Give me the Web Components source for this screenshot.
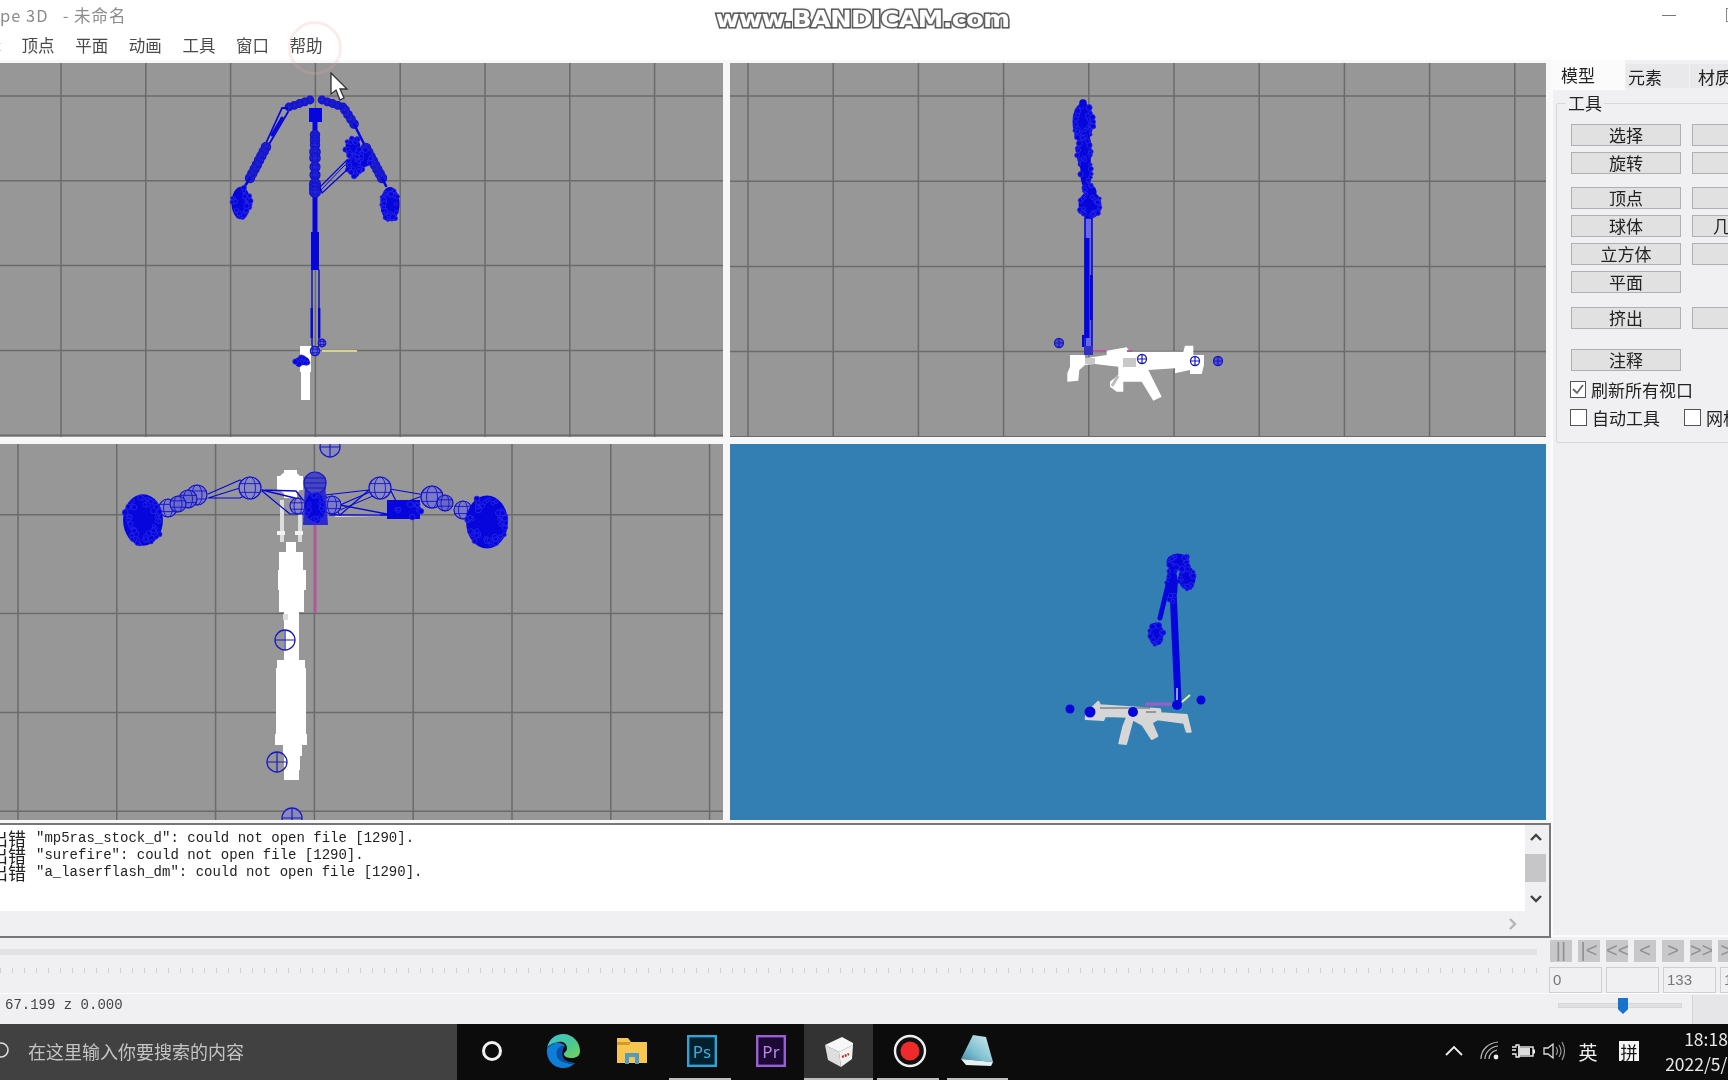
<!DOCTYPE html>
<html>
<head>
<meta charset="utf-8">
<title>MilkShape 3D</title>
<style>
   html, body { margin: 0; height: 1080px; overflow: hidden; background: #f0f0f2; }
   /* the reference is a video frame, everything in it is a little soft */
   body { position: relative; font-family: "Noto Sans CJK SC", "Noto Sans", sans-serif; filter: blur(.45px); }
</style>
</head>
<body>
<app-titlebar>pe 3D&nbsp;&nbsp;&nbsp;- 未命名</app-titlebar>
<app-menubar></app-menubar>
<app-main>
   <model-viewport slot="views" scene="front" view="0 63 723 374" gx="61" gy="96" step="84.8"></model-viewport>
   <model-viewport slot="views" scene="side" view="730 63 816 374" gx="748" gy="96" step="85.2"></model-viewport>
   <model-viewport slot="views" scene="top" view="0 444 723 376" gx="18" gy="416" step="98.8"></model-viewport>
   <model-viewport slot="views" scene="persp" view="730 444 816 376" blue></model-viewport>
   <log-panel slot="log"></log-panel>
   <tool-panel slot="tools"></tool-panel>
</app-main>
<time-bar></time-bar>
<status-bar>67.199 z 0.000</status-bar>
<win-taskbar></win-taskbar>
<screen-overlay></screen-overlay>

<script>
const BLUE = '#0606dc';

// small seeded random so the wire blobs stay the same on every load
function makeRandom(seed) {
   let s = seed;
   return () => {
      s = (s * 16807) % 2147483647;
      return s / 2147483647;
   };
}

function poly(points, width, color) {
   return `<polyline points="${points}" fill="none" stroke="${color || BLUE}" stroke-width="${width}" stroke-linejoin="round" stroke-linecap="round"/>`;
}

function shape(points, color, grow) {
   const c = color || '#fff';
   return `<polygon points="${points}" fill="${c}" stroke="${c}" stroke-width="${grow || 0}" stroke-linejoin="round"/>`;
}

function rects(list, color) {
   return list.map(([x1, x2, y1, y2]) => `<rect x="${x1}" y="${y1}" width="${x2 - x1}" height="${y2 - y1}" fill="${color || '#fff'}"/>`).join('');
}

function blob(rnd, cx, cy, rx, ry, count) {
   let out = `<ellipse cx="${cx}" cy="${cy}" rx="${rx * 0.95}" ry="${ry * 0.95}" fill="${BLUE}"/>`;
   for (let i = 0; i < count; i++) {
      const a = rnd() * Math.PI * 2;
      const d = 0.55 + rnd() * 0.4;
      const x = cx + Math.cos(a) * rx * d;
      const y = cy + Math.sin(a) * ry * d;
      const r = 1.4 + rnd() * 1.6;
      out += `<circle cx="${x.toFixed(1)}" cy="${y.toFixed(1)}" r="${r.toFixed(1)}" fill="${BLUE}" stroke="#2a2ae8" stroke-width=".8"/>`;
   }
   return out;
}

function bead(cx, cy, r, fill) {
   return `<circle cx="${cx}" cy="${cy}" r="${r}" fill="${fill || '#4a4ad0'}" stroke="#1414c8" stroke-width="1.2"/>` +
      `<ellipse cx="${cx}" cy="${cy}" rx="${r * 0.5}" ry="${r}" fill="none" stroke="#1414c8" stroke-width=".9"/>` +
      `<path d="M${cx - r} ${cy - r * 0.4}H${cx + r}M${cx - r} ${cy + r * 0.4}H${cx + r}" stroke="#1414c8" stroke-width=".9"/>`;
}

function beads(x1, y1, x2, y2, count, r) {
   let out = '';
   for (let i = 0; i < count; i++) {
      const t = count > 1 ? i / (count - 1) : 0;
      out += bead(+(x1 + (x2 - x1) * t).toFixed(1), +(y1 + (y2 - y1) * t).toFixed(1), r, '#2222d8');
   }
   return out;
}

function sphere(cx, cy, r, fill) {
   return `<circle cx="${cx}" cy="${cy}" r="${r}" fill="${fill || 'none'}" stroke="#1a1ac0" stroke-width="1.3"/>` +
      `<path d="M${cx - r} ${cy}H${cx + r}M${cx} ${cy - r}V${cy + r}" stroke="#1a1ac0" stroke-width="1.2"/>`;
}

const SCENES = {
   front() {
      const rnd = makeRandom(11);
      let s = '';
      s += rects([[300, 311, 346, 372], [301, 310, 372, 400]]);
      s += poly('315,118 315,232', 5);
      s += `<rect x="311" y="232" width="8" height="38" fill="${BLUE}"/>`;
      s += poly('312,270 312,345 316,352 319,345 319,270', 1.4);
      s += `<rect x="310.5" y="308" width="2.4" height="30" fill="${BLUE}"/><rect x="318" y="308" width="2.4" height="30" fill="${BLUE}"/>`;
      s += beads(315, 135, 315, 145, 3, 4.6);
      s += beads(315, 152, 315, 158, 2, 5.2);
      s += beads(315, 167, 315, 175, 2, 5);
      s += beads(315, 184, 315, 192, 3, 5.4);
      s += `<rect x="309" y="108" width="13" height="14" fill="${BLUE}"/>`;
      // left arm
      s += beads(310, 100, 289, 107, 5, 3.8);
      s += poly('287,108 282,108 266,143 268,146 288,112', 1.8);
      s += poly('282,118 272,135', 3);
      s += beads(266, 147, 250, 178, 8, 4.6);
      s += poly('250,178 245,186', 2.5);
      // right arm
      s += beads(322, 100, 343, 107, 5, 3.8);
      s += beads(345, 110, 354, 124, 4, 4.2);
      s += poly('354,124 366,148', 2.5);
      s += beads(366, 148, 382, 178, 8, 4.6);
      s += poly('382,178 386,186', 2.5);
      s += blob(rnd, 241, 203, 10, 17, 30);
      s += blob(rnd, 390, 204, 10, 18, 30);
      s += blob(rnd, 353, 148, 8, 11, 14);
      s += blob(rnd, 355, 165, 10, 9, 16);
      s += blob(rnd, 366, 158, 6, 9, 8);
      s += blob(rnd, 355, 172, 5, 6, 6);
      s += poly('347,160 320,187 322,193 350,167', 1.3);
      s += poly('345,165 321,190', 1);
      s += blob(rnd, 302, 361, 8, 4.5, 10);
      s += `<path d="M322 351H357" stroke="#d8d488" stroke-width="2"/>`;
      s += bead(315, 351, 4.6, '#6060c8');
      s += bead(322, 343, 3.8, '#6060c8');
      return s;
   },
   side() {
      const rnd = makeRandom(29);
      const X = x => 1030 + x / 3;
      const Y = y => 80 + y / 3;
      const gun = [[120, 825], [165, 825], [165, 835], [230, 825], [230, 812], [290, 802], [300, 815], [460, 815], [465, 797], [490, 797], [490, 825], [522, 825], [522, 855], [515, 882], [480, 882], [480, 870], [435, 880], [435, 865], [355, 870], [395, 950], [370, 962], [335, 905], [280, 905], [280, 935], [260, 935], [240, 920], [240, 905], [265, 885], [265, 860], [195, 852], [165, 855], [148, 870], [145, 902], [112, 905], [112, 880], [120, 860]];
      let s = '';
      s += shape(gun.map(p => `${X(p[0]).toFixed(1)},${Y(p[1]).toFixed(1)}`).join(' '));
      s += `<rect x="1085" y="358" width="10" height="6" fill="#c8c8c8"/><rect x="1123" y="358" width="13" height="9" fill="#c8c8c8"/>`;
      s += `<path d="M1118 376L1112 386" stroke="#bbb" stroke-width="3"/>`;
      s += `<path d="M1092 351H1106M1127 351H1132" stroke="#c0559a" stroke-width="2"/>`;
      s += `<rect x="1085" y="218" width="7" height="130" fill="#6a6ae0" stroke="${BLUE}" stroke-width="1.6"/>`;
      s += `<rect x="1084.5" y="238" width="5" height="100" fill="${BLUE}"/><rect x="1090" y="275" width="2.8" height="45" fill="${BLUE}"/>`;
      s += `<rect x="1084" y="346" width="9" height="9" fill="#3030c8"/>`;
      s += `<rect x="1082" y="335" width="2" height="12" fill="${BLUE}"/>`;
      s += blob(rnd, 1083, 122, 11, 20, 30);
      s += blob(rnd, 1084, 150, 8, 22, 24);
      s += blob(rnd, 1086, 172, 6, 18, 10);
      s += `<circle cx="1083" cy="103" r="3.8" fill="${BLUE}"/>`;
      s += blob(rnd, 1090, 205, 12, 14, 28);
      s += blob(rnd, 1090, 192, 7, 7, 8);
      s += sphere(1059, 343, 4.5, '#4a4acc');
      s += sphere(1142, 359, 4.5, '#fff');
      s += sphere(1195, 361, 4.5, '#fff');
      s += sphere(1218, 361, 4.5, '#5050cc');
      return s;
   },
   top() {
      const rnd = makeRandom(47);
      let s = '';
      s += rects([[280, 284, 500, 542], [298, 302, 500, 542]], '#ddd');
      s += rects([[277, 285, 531, 535], [295, 303, 531, 535]], '#f2f2f2');
      s += `<circle cx="290" cy="483" r="12" fill="#fff"/>`;
      s += rects([[277, 303, 476, 490], [284, 297, 470, 498]]);
      s += rects([[286, 296, 542, 552], [279, 303, 552, 570], [278, 306, 570, 590], [279, 304, 590, 612], [284, 299, 612, 660], [277, 305, 660, 668], [276, 306, 668, 724], [276, 306, 724, 734], [275, 307, 734, 745], [283, 302, 745, 756], [284, 300, 756, 770], [284, 299, 770, 780]]);
      s += rects([[283, 288, 614, 620]], '#ddd');
      s += `<rect x="314" y="525" width="2.5" height="88" fill="#c050a0"/>`;
      s += `<path d="M335 516L380 515" stroke="#e8e4a0" stroke-width="2"/>`;
      s += poly('262,490 296,491 303,500 262,490', 1.3);
      s += poly('208,494 240,480 261,487 240,498 208,498 240,488', 1.2);
      s += poly('262,491 290,514 305,514', 1.2);
      s += poly('325,495 369,490 340,515 325,495', 1.2);
      s += poly('330,515 372,515 392,515 340,505 370,492', 1.3);
      s += poly('390,489 425,495 398,505 390,489', 1.2);
      s += poly('340,510 380,493', 1);
      s += bead(197, 495, 10, '#7a7ac8');
      s += bead(188, 499, 9, '#6a6ac8');
      s += bead(168, 508, 9, '#7a7ac8');
      s += bead(178, 504, 8, '#6a6ac8');
      s += bead(250, 488, 11, '#8a8ac0');
      s += bead(380, 488, 11, '#8a8ac0');
      s += bead(432, 497, 11, '#7a7ac8');
      s += bead(445, 503, 8, '#6a6ac8');
      s += bead(463, 510, 9, '#7a7ac8');
      s += bead(332, 505, 9, '#7a7ac8');
      s += bead(298, 506, 8, '#8a8ac0');
      s += shape('305,482 315,472 325,482 328,525 303,525', '#2a2ad0');
      s += `<circle cx="315" cy="483" r="11" fill="#4646c0" stroke="#1a1ac0" stroke-width="1.2"/>`;
      s += `<path d="M304 483H326M304 478H326M304 488H326" stroke="#1a1ac0" stroke-width="1"/>`;
      s += blob(rnd, 315, 507, 11, 15, 18);
      s += `<rect x="387" y="500" width="33" height="19" fill="${BLUE}"/>`;
      s += blob(rnd, 408, 510, 14, 9, 10);
      s += blob(rnd, 143, 520, 21, 27, 50);
      s += blob(rnd, 487, 522, 22, 28, 50);
      s += sphere(285, 640, 10);
      s += sphere(277, 762, 10);
      s += sphere(292, 818, 10, '#8a8ab8');
      s += sphere(330, 447, 10, '#8a8ab8');
      return s;
   },
   persp() {
      const rnd = makeRandom(61);
      const X = x => 1040 + x / 3;
      const Y = y => 530 + y / 3;
      const gun = [[140, 545], [160, 530], [175, 515], [180, 526], [360, 538], [362, 550], [440, 555], [452, 605], [440, 605], [432, 578], [352, 568], [335, 578], [352, 618], [335, 627], [308, 585], [278, 568], [258, 642], [238, 640], [250, 590], [262, 560], [195, 558], [190, 570], [137, 567]];
      let s = '';
      s += shape(gun.map(p => `${X(p[0]).toFixed(1)},${Y(p[1]).toFixed(1)}`).join(' '), '#d6d6d6', 2);
      s += `<path d="M1100 708H1150M1146 712H1156" stroke="#5a5a5a" stroke-width="1"/>`;
      s += `<path d="M1145 704H1173" stroke="#9a60c8" stroke-width="3"/>`;
      s += `<path d="M1182 702L1190 695" stroke="#e0f0a0" stroke-width="2"/>`;
      s += poly('1172,568 1178,700', 7);
      s += `<path d="M1177 688V702" stroke="#cfd8f8" stroke-width="1.4"/>`;
      s += blob(rnd, 1178, 562, 12, 9, 16);
      s += blob(rnd, 1187, 578, 9, 12, 14);
      s += blob(rnd, 1172, 585, 6, 20, 8);
      s += poly('1168,585 1160,618', 5);
      s += blob(rnd, 1156, 634, 8, 12, 12);
      for (const [x, y, r] of [[1070, 709, 4.5], [1090, 712, 5.5], [1133, 712, 5], [1201, 700, 4.5], [1177, 705, 5]]) {
         s += `<circle cx="${x}" cy="${y}" r="${r}" fill="${BLUE}"/>`;
      }
      return s;
   }
};

class AppTitlebar extends HTMLElement {
   constructor() {
      super();
      this.attachShadow({mode: 'open'}).innerHTML = `
         <style>
            :host { display: flex; align-items: center; height: 30px; background: #fff; color: #8c8c8c; font-size: 16.5px; letter-spacing: 1px; white-space: nowrap; }
            .grow { flex: 1; }
            .min { width: 14px; height: 1px; background: #777; margin-right: 50px; }
            .max { width: 12px; height: 12px; border: 1px solid #888; margin-right: -12px; }
         </style>
         <slot></slot><span class="grow"></span><span class="min"></span><span class="max"></span>
      `;
   }
}
customElements.define('app-titlebar', AppTitlebar);

class AppMenubar extends HTMLElement {
   constructor() {
      super();
      const items = ['编辑', '顶点', '平面', '动画', '工具', '窗口', '帮助'];
      this.attachShadow({mode: 'open'}).innerHTML = `
         <style>
            :host { display: flex; gap: 20px; height: 30px; margin-left: -32px; align-items: center; background: #fff; color: #4a4a4a; font-size: 16.5px; box-shadow: 32px 1px 0 #e4e4e4; white-space: nowrap; }
            span { width: 33.6px; }
         </style>
         ${items.map(i => `<span>${i}</span>`).join('')}
      `;
   }
}
customElements.define('app-menubar', AppMenubar);

class AppMain extends HTMLElement {
   constructor() {
      super();
      this.attachShadow({mode: 'open'}).innerHTML = `
         <style>
            :host { display: grid; grid-template-columns: 1551px 177px; height: 878px; overflow: hidden; }
            .left { display: flex; flex-direction: column; background: #f7f7f8; }
            .views { display: grid; grid-template-columns: 723px 816px; grid-template-rows: 374px 376px; gap: 7px; padding: 3px 5px 3px 0; }
         </style>
         <div class="left">
            <div class="views"><slot name="views"></slot></div>
            <slot name="log"></slot>
         </div>
         <slot name="tools"></slot>
      `;
   }
}
customElements.define('app-main', AppMain);

class ModelViewport extends HTMLElement {
   connectedCallback() {
      const [vx, vy, vw, vh] = this.getAttribute('view').split(' ').map(Number);
      const blue = this.hasAttribute('blue');
      let grid = '';
      if (!blue) {
         const step = Number(this.getAttribute('step'));
         for (let x = Number(this.getAttribute('gx')); x < vx + vw; x += step) {
            grid += `<path d="M${x.toFixed(1)} ${vy}V${vy + vh}" stroke="#6b6b6b" stroke-width="1.5"/>`;
         }
         for (let y = Number(this.getAttribute('gy')); y < vy + vh; y += step) {
            grid += `<path d="M${vx} ${y.toFixed(1)}H${vx + vw}" stroke="#6b6b6b" stroke-width="1.5"/>`;
         }
      }
      this.attachShadow({mode: 'open'}).innerHTML = `
         <style>
            :host { display: block; background: ${blue ? '#337fb4' : '#979797'}; overflow: hidden; }
            svg { display: block; width: 100%; height: 100%; }
         </style>
         <svg viewBox="${vx} ${vy} ${vw} ${vh}">${grid}${SCENES[this.getAttribute('scene')]()}</svg>
      `;
   }
}
customElements.define('model-viewport', ModelViewport);

class LogPanel extends HTMLElement {
   constructor() {
      super();
      const files = ['mp5ras_stock_d', 'surefire', 'a_laserflash_dm'];
      this.attachShadow({mode: 'open'}).innerHTML = `
         <style>
            :host { display: grid; grid-template-columns: 1525px 24px; grid-template-rows: 86px 25px; height: 111px; width: 1549px; background: #f0f0f2; border: 2px solid #777; border-left: 0; }
            .text { background: #fff; padding-top: 5px; overflow: hidden; font: 14px/17px "Liberation Mono", "Noto Sans CJK SC", monospace; color: #222; white-space: pre; }
            .text div { height: 17px; }
            .text b { display: inline-block; width: 46px; margin-left: -10px; font: 400 18px/17px "Noto Sans CJK SC", sans-serif; vertical-align: top; }
            .bar { display: flex; flex-direction: column; align-items: center; justify-content: space-between; grid-row: 1; grid-column: 2; width: 21px; padding: 7px 0; box-sizing: border-box; }
            .thumb { width: 100%; height: 28px; background: #c6c6c8; }
            .row { grid-column: 1; display: flex; justify-content: flex-end; align-items: center; padding-right: 7px; }
         </style>
         <div class="text">${files.map(f => `<div><b>出错</b>"${f}": could not open file [1290].</div>`).join('')}</div>
         <div class="bar">
            <svg width="14" height="10"><path d="M2 8L7 3L12 8" fill="none" stroke="#444" stroke-width="2.4"/></svg>
            <div class="thumb"></div>
            <svg width="14" height="10"><path d="M2 2L7 7L12 2" fill="none" stroke="#444" stroke-width="2.4"/></svg>
         </div>
         <div class="row"><svg width="10" height="14"><path d="M2 2L7 7L2 12" fill="none" stroke="#b4b4b4" stroke-width="2.4"/></svg></div>
      `;
   }
}
customElements.define('log-panel', LogPanel);

class ToolPanel extends HTMLElement {
   constructor() {
      super();
      const rows = [
         ['选择', '', 0], ['旋转', '', 6], ['顶点', '', 13], ['球体', '几何球体', 6],
         ['立方体', '', 6], ['平面', null, 6], ['挤出', '', 14], ['注释', null, 20]
      ];
      const rowHtml = rows.map(([a, b, top]) => `
         <div class="row" style="margin-top:${top}px">
            <button>${a}</button>${b === null ? '' : `<button>${b}</button>`}
         </div>`).join('');
      const tick = '<svg width="14" height="12" viewBox="0 0 14 12"><path d="M2 6L6 10L12 2" fill="none" stroke="#666" stroke-width="1.8"/></svg>';
      this.attachShadow({mode: 'open'}).innerHTML = `
         <style>
            :host { display: block; overflow: hidden; background: #f0f0f2; border-left: 2px solid #fbfbfb; height: 875px; border-bottom: 2px solid #fbfbfb; font-size: 17px; color: #222; }
            .tabs { display: flex; height: 30px; width: 260px; align-items: flex-end; }
            .tab { display: flex; justify-content: flex-start; align-items: center; padding-left: 2px; box-sizing: border-box; height: 24px; width: 63px; margin: 0 1px 2px 0; background: #e9e9eb; }
            .tab.on { height: 30px; width: 72px; margin-bottom: 0; background: #fbfbfc; padding-bottom: 2px; padding-left: 8px; }
            .tab.last { width: 80px; padding-left: 8px; }
            fieldset { margin: 1px 0 0 3px; padding: 0; width: 260px; height: 352px; box-sizing: border-box; border: 1px solid #d8d8da; border-radius: 2px; }
            legend { margin-left: 9px; padding: 0 2px; line-height: 24px; }
            .rows { margin: 9px 0 0 14px; }
            .row { display: flex; gap: 11px; height: 22px; }
            button { flex: none; width: 110px; height: 22px; padding: 0; border: 1px solid #b0b0b0; background: #e1e1e2; font: inherit; line-height: 20px; color: inherit; white-space: nowrap; }
            .check { display: flex; align-items: center; height: 18px; gap: 5px; flex: none; white-space: nowrap; }
            .box { display: flex; align-items: center; justify-content: center; width: 15px; height: 15px; border: 1.5px solid #555; background: #fff; }
            .checks { display: flex; margin-top: 10px; margin-left: -1px; }
            .checks .check:nth-child(1) { width: 114px; }
         </style>
         <div class="tabs"><div class="tab on">模型</div><div class="tab">元素</div><div class="tab last">材质</div></div>
         <fieldset>
            <legend>工具</legend>
            <div class="rows">
               ${rowHtml}
               <div class="checks" style="margin-top:9px"><div class="check"><span class="box">${tick}</span>刷新所有视口</div></div>
               <div class="checks"><div class="check"><span class="box"></span>自动工具</div><div class="check"><span class="box"></span>网格</div></div>
            </div>
         </fieldset>
      `;
   }
}
customElements.define('tool-panel', ToolPanel);

class TimeBar extends HTMLElement {
   constructor() {
      super();
      const keys = ['||', '|<', '<<', '<', '>', '>>', '>|'];
      const fields = ['0', '', '133', '133'];
      const esc = t => t.replace(/</g, '&lt;');
      this.attachShadow({mode: 'open'}).innerHTML = `
         <style>
            :host { display: grid; grid-template-columns: 1549px 179px; height: 55px; background: #f0f0f2; border-bottom: 1px solid #fcfcfc; overflow: hidden; }
            .track { width: 1537px; height: 6px; margin-top: 11px; background: #e2e2e4; }
            .ticks { width: 1537px; height: 5px; margin-top: 13px; background: repeating-linear-gradient(90deg, #cfcfd2 0 1px, transparent 1px 12px); }
            .keys { display: flex; gap: 6px; margin: 2px 0 0 1px; width: 200px; }
            .key { flex: none; width: 22px; height: 22px; background: #c8c8ca; color: #909090; font: 20px/21px "Liberation Sans", sans-serif; text-align: center; overflow: hidden; white-space: nowrap; }
            .fields { display: flex; gap: 4px; margin-top: 5px; width: 240px; }
            .field { flex: none; width: 51px; height: 24px; border: 1px solid #cfcfd1; background: #f0f0f2; color: #777; font: 15px/24px "Liberation Sans", sans-serif; text-indent: 3px; }
         </style>
         <div><div class="track"></div><div class="ticks"></div></div>
         <div>
            <div class="keys">${keys.map(k => `<span class="key">${esc(k)}</span>`).join('')}</div>
            <div class="fields">${fields.map(f => `<span class="field">${f}</span>`).join('')}</div>
         </div>
      `;
   }
}
customElements.define('time-bar', TimeBar);

class StatusBar extends HTMLElement {
   constructor() {
      super();
      this.attachShadow({mode: 'open'}).innerHTML = `
         <style>
            :host { display: flex; height: 29px; background: #f0f0f2; font: 14px/20px "Liberation Mono", monospace; color: #444; overflow: hidden; padding-top: 1px; }
            .text { width: 1558px; padding: 0 0 0 5px; box-sizing: border-box; flex: none; }
            .slider { position: relative; flex: none; width: 124px; height: 5px; margin-top: 8px; background: #e0e0e2; border: 1px solid #d6d6d8; box-sizing: border-box; }
            .thumb { position: absolute; left: 59px; top: -6px; width: 10px; height: 16px; background: #1873cf; clip-path: polygon(0 0, 100% 0, 100% 70%, 50% 100%, 0 70%); }
            .box { flex: none; width: 60px; margin-left: 10px; background: #e6e6e8; border-left: 1px solid #d2d2d4; }
         </style>
         <span class="text"><slot></slot></span>
         <div class="slider"><div class="thumb"></div></div>
         <div class="box"></div>
      `;
   }
}
customElements.define('status-bar', StatusBar);

const TASK_ICONS = {
   ring: `<svg width="24" height="24"><circle cx="12" cy="12" r="8.5" fill="none" stroke="#f2f2f2" stroke-width="3"/></svg>`,
   edge: `<svg width="36" height="36" viewBox="0 0 36 36">
      <defs><linearGradient id="e1" x1="0" y1="0" x2="1" y2="1"><stop offset="0" stop-color="#3ac2d8"/><stop offset=".6" stop-color="#4cc88c"/><stop offset="1" stop-color="#7ad65a"/></linearGradient></defs>
      <path d="M2 16C3 6 11 1 18 1C28 1 35 9 35 18C35 23 31 25 27 25C23 25 19 24 19 21C19 19 22 19 22 15C22 11 18 8 14 9C8 10 3 12 2 16Z" fill="url(#e1)"/>
      <path d="M2 16C1 26 8 35 18 35C23 35 27 33 30 30C25 31 19 30 15 27C11 24 11 18 14 15C16 13 19 13 20 13C17 9 11 9 8 11C5 12 3 14 2 16Z" fill="#0d7fd8"/>
      <path d="M14 15C11 18 11 24 15 27C19 30 25 31 30 30C26 29 20 29 18 24C17 21 17 17 20 13C19 13 16 13 14 15Z" fill="#0a4fa8"/>
   </svg>`,
   folder: `<svg width="32" height="30" viewBox="0 0 32 30">
      <path d="M1 2H12L15 6H31V27H1Z" fill="#f6c64f"/><path d="M1 6H15L13 9H1Z" fill="#d49a2c"/>
      <path d="M9 28V17H23V28H19V21H13V28Z" fill="#4f9bc4"/>
   </svg>`,
   ps: `<svg width="30" height="32"><rect x="1.2" y="1.2" width="27.6" height="29.6" fill="#04202c" stroke="#2fa3d6" stroke-width="2.4"/><text x="15" y="23" text-anchor="middle" font-family="Noto Sans, sans-serif" font-size="17" fill="#3ab0e4">Ps</text></svg>`,
   pr: `<svg width="30" height="32"><rect x="1.2" y="1.2" width="27.6" height="29.6" fill="#1c0a34" stroke="#9a5fd6" stroke-width="2.4"/><text x="15" y="23" text-anchor="middle" font-family="Noto Sans, sans-serif" font-size="17" fill="#b987e8">Pr</text></svg>`,
   box: `<svg width="34" height="34" viewBox="0 0 34 34">
      <path d="M3 11L20 3L31 9L31 11L17 18Z" fill="#f7f7f7"/><path d="M3 11L17 18L19 33L6 26Z" fill="#dedede"/><path d="M17 18L31 11L30 25L19 33Z" fill="#f2f2f2"/>
      <path d="M20 23L27 20" stroke="#c42a2a" stroke-width="2.4" stroke-dasharray="2 1"/>
   </svg>`,
   rec: `<svg width="34" height="34"><circle cx="17" cy="17" r="15" fill="#111" stroke="#f0f0f0" stroke-width="2.4"/><circle cx="17" cy="17" r="9.5" fill="#f02a2a"/></svg>`,
   pen: `<svg width="34" height="34" viewBox="0 0 34 34">
      <defs><linearGradient id="p1" x1="1" y1="0" x2="0" y2="1"><stop offset="0" stop-color="#d4eef2"/><stop offset=".6" stop-color="#7fc0d0"/><stop offset="1" stop-color="#3d88a8"/></linearGradient></defs>
      <path d="M13 1L26 3L33 28L1 25Z" fill="url(#p1)"/><path d="M1 25L33 28L31 32L6 31Z" fill="#e6f0f2"/>
   </svg>`
};

class TaskIcon extends HTMLElement {
   connectedCallback() {
      const active = this.hasAttribute('active');
      const open = this.hasAttribute('open');
      const shift = this.getAttribute('shift') || 0;
      this.attachShadow({mode: 'open'}).innerHTML = `
         <style>
            :host { position: relative; display: flex; flex: none; width: 69.4px; height: 56px; align-items: center; justify-content: center; padding: 0 0 2px ${shift}px; box-sizing: border-box; background: ${active ? '#333334' : 'none'}; }
            i { position: absolute; bottom: 0; height: 2px; left: ${active ? 0 : 4}px; right: ${active ? 0 : 4}px; background: #bdbdbd; display: ${active || open ? 'block' : 'none'}; }
         </style>
         ${TASK_ICONS[this.getAttribute('icon')]}<i></i>
      `;
   }
}
customElements.define('task-icon', TaskIcon);

class WinTaskbar extends HTMLElement {
   constructor() {
      super();
      this.attachShadow({mode: 'open'}).innerHTML = `
         <style>
            :host { display: flex; height: 56px; background: #0c0c0c; overflow: hidden; color: #f2f2f2; white-space: nowrap; }
            .search { flex: none; display: flex; align-items: center; width: 457px; height: 56px; padding-left: 28px; box-sizing: border-box; background: #414141; color: #c4c4c4; font-size: 18px; padding-bottom: 2px; position: relative; }
            .search svg { position: absolute; left: -8px; top: 17px; }
            .icons { display: flex; flex: none; width: 979px; }
            .tray { flex: none; display: flex; align-items: center; justify-content: center; height: 56px; padding-bottom: 2px; box-sizing: border-box; font-size: 19px; }
            .pin { display: flex; align-items: center; justify-content: center; width: 20px; height: 20px; background: #f4f4f4; color: #111; font-size: 17px; }
            .clock { flex: none; width: 104px; text-align: center; font-size: 17.5px; line-height: 25px; padding-top: 2px; color: #e8e8e8; }
         </style>
         <div class="search"><svg width="18" height="18"><circle cx="9" cy="9" r="7" fill="none" stroke="#ddd" stroke-width="1.6"/></svg>在这里输入你要搜索的内容</div>
         <div class="icons">
            <task-icon icon="ring"></task-icon>
            <task-icon icon="edge" shift="4"></task-icon>
            <task-icon icon="folder" shift="4"></task-icon>
            <task-icon icon="ps" open shift="4"></task-icon>
            <task-icon icon="pr" shift="4"></task-icon>
            <task-icon icon="box" active></task-icon>
            <task-icon icon="rec" open shift="4"></task-icon>
            <task-icon icon="pen" open></task-icon>
         </div>
         <div class="tray" style="width:36px"><svg width="20" height="12"><path d="M2 10L10 2L18 10" fill="none" stroke="#eee" stroke-width="1.8"/></svg></div>
         <div class="tray" style="width:36px"><svg width="20" height="20" viewBox="0 0 20 20"><g fill="none" stroke="#bbb" stroke-width="1.2"><path d="M1 18C1 9 8 2 18 1"/><path d="M5 18C5 12 10 6 18 5"/><path d="M9 18C9 14 12 10 17 9"/></g><circle cx="16" cy="16" r="2.4" fill="#eee"/></svg></div>
         <div class="tray" style="width:30px"><svg width="24" height="18" viewBox="0 0 24 18"><path d="M1 5H5V3H8V15H5V12H1M1 8H5" fill="none" stroke="#eee" stroke-width="1.3"/><rect x="8" y="5" width="14" height="9" fill="none" stroke="#eee" stroke-width="1.4"/><rect x="9" y="6" width="10" height="7" fill="#ddd"/><rect x="22" y="7.5" width="2" height="4" fill="#eee"/></svg></div>
         <div class="tray" style="width:34px"><svg width="24" height="20" viewBox="0 0 24 20"><path d="M1 7H5L10 3V17L5 13H1Z" fill="none" stroke="#ddd" stroke-width="1.3"/><g fill="none" stroke="#999" stroke-width="1.2"><path d="M13 6Q16 10 13 14"/><path d="M16 4Q20 10 16 16"/><path d="M19 1Q24 10 19 19"/></g></svg></div>
         <div class="tray" style="width:32px">英</div>
         <div class="tray" style="width:50px"><span class="pin">拼</span></div>
         <div class="clock">18:18<br>2022/5/19</div>
      `;
   }
}
customElements.define('win-taskbar', WinTaskbar);

// cursor, click ring and recorder watermark sit over the captured window
class ScreenOverlay extends HTMLElement {
   constructor() {
      super();
      this.attachShadow({mode: 'open'}).innerHTML = `
         <style>
            :host { display: block; position: absolute; inset: 0; pointer-events: none; }
            .ring { position: absolute; left: 288px; top: 21px; width: 48px; height: 48px; border: 3px solid rgba(232, 170, 165, .22); border-radius: 50%; }
            .cursor { position: absolute; left: 329px; top: 72px; }
            .mark { position: absolute; left: 714px; top: 3px; width: 297px; display: flex; justify-content: center; transform: scaleX(1.09); font: 700 23.5px/32px "DejaVu Sans", sans-serif; color: #fff; -webkit-text-stroke: 3px #4a4a4a; paint-order: stroke fill; text-shadow: 0 0 3px #999; white-space: nowrap; letter-spacing: -.6px; }
         </style>
         <div class="ring"></div>
         <svg class="cursor" width="20" height="30" viewBox="0 0 20 30"><path d="M2 1L2 22L7 18L11 28L15 26L11 17L18 17Z" fill="#fff" stroke="#333" stroke-width="1.3"/></svg>
         <div class="mark">www.BANDICAM.com</div>
      `;
   }
}
customElements.define('screen-overlay', ScreenOverlay);
</script>
</body>
</html>
